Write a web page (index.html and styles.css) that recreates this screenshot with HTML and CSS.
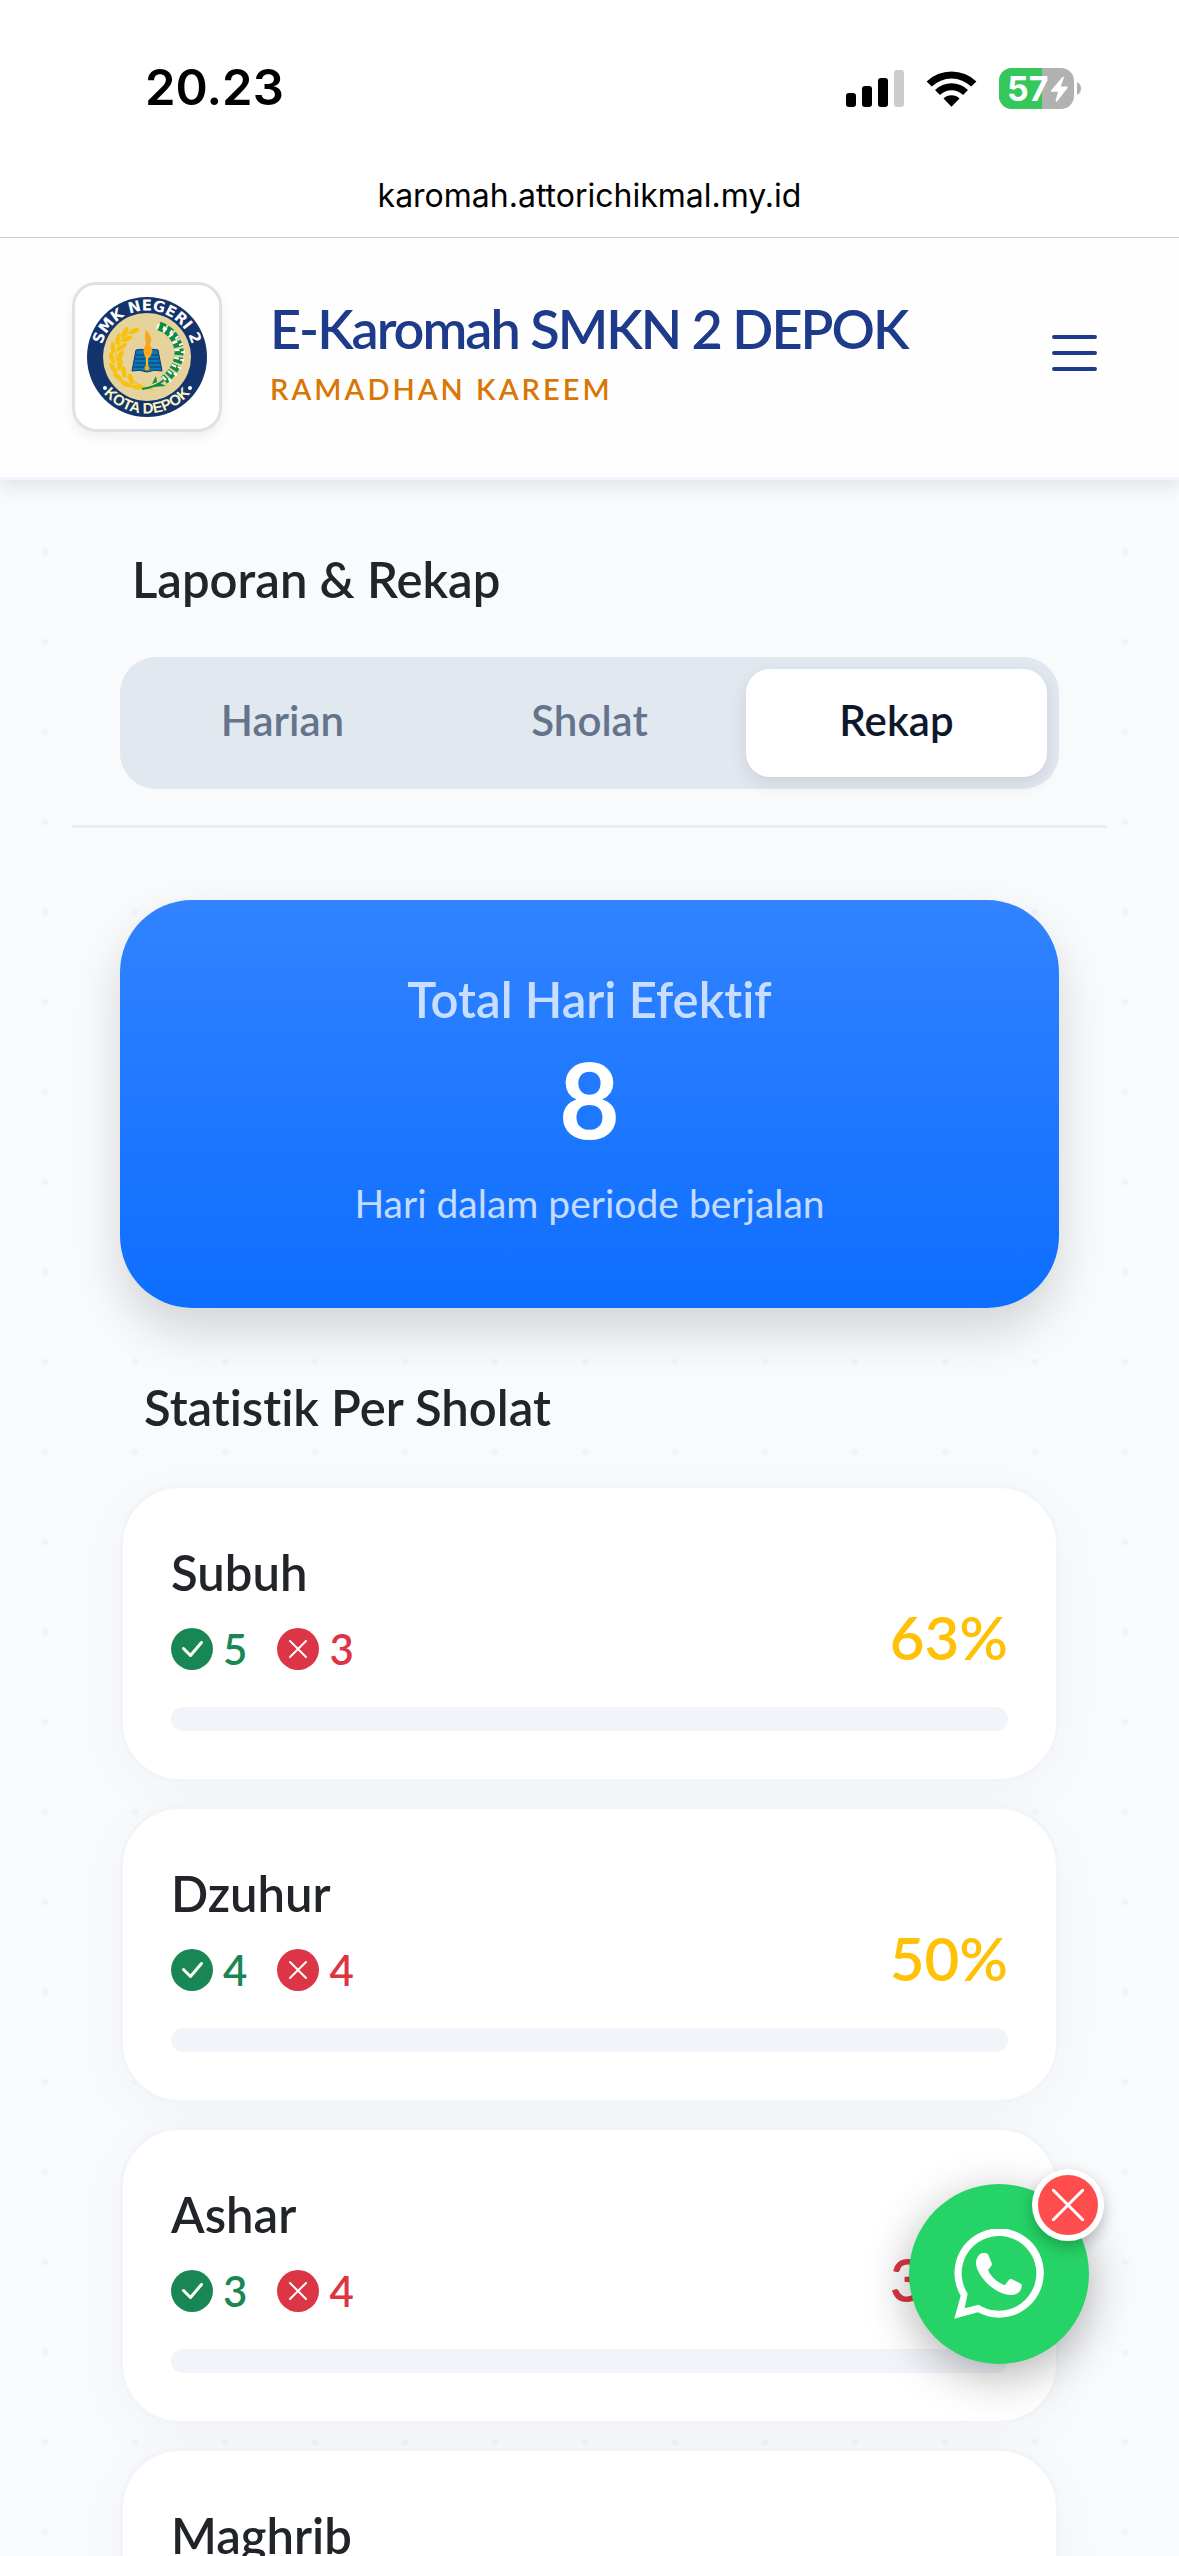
FILE: index.html
```html
<!DOCTYPE html>
<html lang="id">
<head>
    <meta charset="UTF-8">
    <meta name="viewport" content="width=device-width, initial-scale=1.0">
    <title>E-Karomah SMKN 2 DEPOK</title>
    <link rel="stylesheet" href="styles.css">
</head>
<body>
    <!-- Status bar -->
    <div class="browser-bar">
        <div class="status-bar">
            <span class="clock">20.23</span>
            <div class="status-icons">
                <svg class="signal" viewBox="0 0 58 37" aria-hidden="true">
                    <rect x="0" y="23" width="10" height="14" rx="3"/>
                    <rect x="16" y="16" width="10" height="21" rx="3"/>
                    <rect x="32" y="8" width="10" height="29" rx="3"/>
                    <rect x="48" y="0" width="10" height="37" rx="3" fill="#ccc"/>
                </svg>
                <svg class="wifi" viewBox="0 0 51 37" aria-hidden="true">
                    <path d="M0.6 11.4a36 36 0 0 1 49.8 0l-5.2 5.1a28.500 28.500 0 0 0-39.400 0z"/>
                    <path d="M9 20a23.500 23.500 0 0 1 33 0l-5 5a16.500 16.500 0 0 0-23 0z"/>
                    <path d="M17.500 28.500a11.500 11.500 0 0 1 16 0l-8 8.200z"/>
                </svg>
                <svg class="battery" viewBox="0 0 82 41" role="img" aria-label="57%">
                    <defs>
                        <clipPath id="batt"><rect width="75" height="41" rx="13"/></clipPath>
                    </defs>
                    <g clip-path="url(#batt)">
                        <rect width="75" height="41" fill="#b1b1b1"/>
                        <rect width="43" height="41" fill="#34c759"/>
                    </g>
                    <path d="M78 14q4 2 4 6.500t-4 6.500z" fill="#b1b1b1"/>
                    <text x="8" y="33" class="battery-text">57</text>
                    <path d="M63.500 9L52 22.500q-.6 1.300.8 1.300h6.200L56.500 33q.6 1.300 1.800.3L68.500 20q.6-1.400-.8-1.500h-5.900l3-8.700q-.2-1.500-1.300-.8z" fill="#fff"/>
                </svg>
            </div>
        </div>
        <div class="url">karomah.attorichikmal.my.id</div>
    </div>

    <div class="page">
        <header class="navbar">
            <div class="logo">
                <svg viewBox="0 0 120 120" role="img" aria-label="SMK Negeri 2 Kota Depok">
                    <defs>
                        <path id="arcTop" d="M13.500 60a46.500 46.500 0 0 1 93 0"/>
                        <path id="arcBottom" d="M3.500 60a56.500 56.500 0 0 0 113 0"/>
                        <ellipse id="leaf" rx="2.400" ry="6"/>
                    </defs>
                    <circle cx="60" cy="60" r="60" fill="#12336b"/>
                    <circle cx="60" cy="60" r="44" fill="#e5d39b"/>
                    <text class="seal-text"><textPath href="#arcTop" startOffset="50%" text-anchor="middle">SMK NEGERI 2</textPath></text>
                    <text class="seal-text seal-bottom"><textPath href="#arcBottom" startOffset="50%" text-anchor="middle">KOTA DEPOK</textPath></text>
                    <circle cx="18" cy="91" r="2" fill="#fff"/>
                    <circle cx="103" cy="91" r="2" fill="#fff"/>
                    <!-- wheat -->
                    <g fill="#f9c20a">
                        <path d="M50 32Q32 38 29 58q1 24 37 35" fill="none" stroke="#f9c20a" stroke-width="1.200"/>
                        <use href="#leaf" transform="translate(47 34) rotate(68)"/>
                        <use href="#leaf" transform="translate(38 35) rotate(30)"/>
                        <use href="#leaf" transform="translate(40 42) rotate(65)"/>
                        <use href="#leaf" transform="translate(31 42) rotate(15)"/>
                        <use href="#leaf" transform="translate(35 50) rotate(50)"/>
                        <use href="#leaf" transform="translate(26 51) rotate(-5)"/>
                        <use href="#leaf" transform="translate(33 59) rotate(30)"/>
                        <use href="#leaf" transform="translate(25 61) rotate(-20)"/>
                        <use href="#leaf" transform="translate(33 68) rotate(15)"/>
                        <use href="#leaf" transform="translate(26 71) rotate(-35)"/>
                        <use href="#leaf" transform="translate(37 75) rotate(-5)"/>
                        <use href="#leaf" transform="translate(31 80) rotate(-50)"/>
                        <use href="#leaf" transform="translate(44 82) rotate(-15)"/>
                        <use href="#leaf" transform="translate(39 87) rotate(-65)"/>
                        <use href="#leaf" transform="translate(50 90) rotate(-85)"/>
                    </g>
                    <!-- cotton -->
                    <path d="M55 92q14-2 22-9" fill="none" stroke="#0d8c46" stroke-width="2"/>
                    <path d="M72 29q17 6 20 24 1 17-15 30" fill="none" stroke="#0d8c46" stroke-width="9" stroke-dasharray="6 2"/>
                    <path d="M70 29q17 6 20 24 1 17-15 30" fill="none" stroke="#fff" stroke-width="5" stroke-dasharray="2 6"/>
                    <path d="M76 31q17 6 20 24 0 17-15 30" fill="none" stroke="#fff" stroke-width="4" stroke-dasharray="2 6"/>
                    <path d="M65 87l4-8 1 6zM66 90l13-1-6-3z" fill="#0d8c46"/>
                    <!-- book and torch -->
                    <path d="M49 53q6-2 11 1 6-3 11-1l4 21q-8-2-15 1-8-3-15-1z" fill="#0b78b8" stroke="#12336b"/>
                    <path d="M49 58h9M62 58h9M48 62h10M62 62h10M48 66h10M62 66h11M47 70h11M62 70h12" stroke="#12336b"/>
                    <path d="M59 33q8 8 4 15 5 6-1 13h-3q-5-7 0-14-2-8 0-14z" fill="#f5a81c"/>
                    <path d="M60 58v11" stroke="#f9c20a" stroke-width="2"/>
                    <circle cx="60" cy="71" r="2.500" fill="#f5a81c"/>
                </svg>
            </div>
            <div class="brand">
                <h1>E-Karomah SMKN 2 DEPOK</h1>
                <p>RAMADHAN KAREEM</p>
            </div>
            <button type="button" class="menu-btn" aria-label="Menu">
                <svg viewBox="0 0 45 40" aria-hidden="true">
                    <path d="M2 3h41M2 19h41M2 35h41"/>
                </svg>
            </button>
        </header>

        <main class="content">
            <section class="page-head">
                <h2 class="section-title">Laporan &amp; Rekap</h2>
                <nav class="tabs">
                    <button type="button">Harian</button>
                    <button type="button">Sholat</button>
                    <button type="button" class="active">Rekap</button>
                </nav>
            </section>

            <div class="recap">
                <section class="total-card">
                    <h3>Total Hari Efektif</h3>
                    <div class="total">8</div>
                    <p>Hari dalam periode berjalan</p>
                </section>

                <h2 class="section-title stat-title">Statistik Per Sholat</h2>

                <div class="stat-list">
                    <article class="stat-card">
                        <div class="stat-head">
                            <div>
                                <h3>Subuh</h3>
                                <div class="counts">
                                    <span class="count done"><svg viewBox="0 0 42 42" aria-hidden="true"><circle cx="21" cy="21" r="21"/><path d="M12.500 20.500l7 7L30.500 14.500"/></svg>5</span>
                                    <span class="count missed"><svg viewBox="0 0 42 42" aria-hidden="true"><circle cx="21" cy="21" r="21"/><path d="M13 13l16 16M29 13L13 29"/></svg>3</span>
                                </div>
                            </div>
                            <span class="percent warning">63%</span>
                        </div>
                        <div class="progress"></div>
                    </article>

                    <article class="stat-card">
                        <div class="stat-head">
                            <div>
                                <h3>Dzuhur</h3>
                                <div class="counts">
                                    <span class="count done"><svg viewBox="0 0 42 42" aria-hidden="true"><circle cx="21" cy="21" r="21"/><path d="M12.500 20.500l7 7L30.500 14.500"/></svg>4</span>
                                    <span class="count missed"><svg viewBox="0 0 42 42" aria-hidden="true"><circle cx="21" cy="21" r="21"/><path d="M13 13l16 16M29 13L13 29"/></svg>4</span>
                                </div>
                            </div>
                            <span class="percent warning">50%</span>
                        </div>
                        <div class="progress"></div>
                    </article>

                    <article class="stat-card">
                        <div class="stat-head">
                            <div>
                                <h3>Ashar</h3>
                                <div class="counts">
                                    <span class="count done"><svg viewBox="0 0 42 42" aria-hidden="true"><circle cx="21" cy="21" r="21"/><path d="M12.500 20.500l7 7L30.500 14.500"/></svg>3</span>
                                    <span class="count missed"><svg viewBox="0 0 42 42" aria-hidden="true"><circle cx="21" cy="21" r="21"/><path d="M13 13l16 16M29 13L13 29"/></svg>4</span>
                                </div>
                            </div>
                            <span class="percent danger">38%</span>
                        </div>
                        <div class="progress"></div>
                    </article>

                    <article class="stat-card">
                        <h3>Maghrib</h3>
                        <div class="progress"></div>
                    </article>
                </div>
            </div>
        </main>
    </div>

    <!-- Floating WhatsApp button -->
    <div class="wa-float">
        <a href="#" class="wa-btn" aria-label="WhatsApp">
            <svg viewBox="0 0 270 270" aria-hidden="true">
                <path fill-rule="evenodd" d="M1 269L20 200A134 134 0 1 1 72 250ZM41 194L32 238L74 227A112 112 0 1 0 41 194Z"/>
                <path d="M85 72h9c5 0 8 3 10 8l9 22c2 5 0 8-3 11l-8 10c8 20 28 37 50 46l12-15c3-4 6-5 10-3l24 12c5 2 6 5 5 10-2 17-18 25-32 25C120 198 66 136 66 102c0-14 8-26 19-30z"/>
            </svg>
        </a>
        <button type="button" class="wa-close" aria-label="Tutup">
            <svg viewBox="0 0 32 32" aria-hidden="true"><path d="M1 1l30 30M31 1L1 31"/></svg>
        </button>
    </div>
</body>
</html>
```
FILE: styles.css
```css
* { box-sizing: border-box; }
body {
    display: flex;
    flex-direction: column;
    height: 100vh;
    margin: 0;
    overflow: hidden;
    font-family: Lato, "Liberation Sans", sans-serif;
    font-variant-ligatures: none;
    color: #212529;
    background: #fff;
}
h1, h2, h3, p { margin: 0; }
button { font-family: inherit; border: none; padding: 0; cursor: pointer; }
svg { display: block; }

/* Status bar */
.browser-bar {
    flex: none;
    padding-top: 58px;
    font-family: Inter, "Liberation Sans", sans-serif;
    color: #000;
}
.status-bar {
    display: flex;
    justify-content: space-between;
    align-items: center;
    height: 60px;
    padding: 0 98px 0 145px;
}
.clock { font-size: 49px; font-weight: 600; line-height: 60px; }
.status-icons { display: flex; align-items: center; gap: 22px; }
.signal { width: 58px; height: 37px; }
.wifi { width: 51px; height: 37px; }
.battery { width: 82px; height: 41px; }
.battery-text { font-size: 34px; font-weight: 700; fill: #fff; }
.url {
    padding: 54px 0 17px;
    font-size: 32px;
    line-height: 48px;
    text-align: center;
}

/* Page */
.page {
    flex: 1;
    min-height: 0;
    overflow: hidden;
    background: radial-gradient(circle at center, #f1f5f9 3px, transparent 4px) 0 0 / 90px 90px #f9fafc;
}
.navbar {
    position: relative;
    display: flex;
    align-items: center;
    gap: 48px;
    padding: 44px 72px 45px;
    background: #fefefe;
    border-top: 1px solid #ccc;
    border-bottom: 3px solid #eff4fe;
    box-shadow: 0 6px 18px rgba(0,0,0,0.1);
}
.logo {
    width: 150px;
    height: 150px;
    padding: 12px;
    background: #fff;
    border: 3px solid #dee2e6;
    border-radius: 24px;
    box-shadow: 0 6px 12px rgba(0,0,0,0.06);
}
.seal-text {
    font-family: "DejaVu Sans", sans-serif;
    font-size: 15px;
    font-weight: 700;
    fill: #fff;
}
.seal-bottom {
    font-family: "Liberation Sans", sans-serif;
    fill: #fdf6c4;
}
.brand { flex: 1; padding-bottom: 12px; }
.brand h1 {
    font-size: 54px;
    font-weight: 600;
    line-height: 66px;
    letter-spacing: -2px;
    color: #1e3a8a;
}
.brand p {
    margin-top: 9px;
    font-size: 29px;
    font-weight: 600;
    line-height: 36px;
    letter-spacing: 3px;
    color: #d97706;
}
.menu-btn { padding: 0 10px 6px 0; background: none; }
.menu-btn svg {
    width: 45px;
    height: 40px;
    fill: none;
    stroke: #1e3a8a;
    stroke-width: 4;
    stroke-linecap: round;
}

.content { padding: 0 72px; }
.section-title { font-size: 49px; font-weight: 600; line-height: 60px; }
.page-head {
    padding: 69px 48px 36px;
    background: #f9fafc;
    border-bottom: 3px solid #ebedef;
}
.page-head .section-title { padding-left: 12px; }
.tabs {
    display: grid;
    grid-template-columns: repeat(3, 1fr);
    gap: 6px;
    margin-top: 48px;
    padding: 12px;
    background: #e2e8f0;
    border-radius: 36px;
}
.tabs button {
    height: 108px;
    padding-bottom: 6px;
    font-size: 42px;
    font-weight: 600;
    color: #64748b;
    background: none;
    border-radius: 24px;
}
.tabs .active {
    color: #0f172a;
    background: #fff;
    box-shadow: 0 6px 18px rgba(0,0,0,0.1);
}

/* Recap */
.recap { padding: 72px 48px 0; }
.total-card {
    padding: 69px 48px 75px;
    text-align: center;
    color: #fff;
    background: linear-gradient(180deg, #3183ff, #0d6eff);
    border-radius: 72px;
    box-shadow: 0 24px 48px rgba(0,0,0,0.15);
}
.total-card h3 {
    font-size: 49px;
    font-weight: 600;
    line-height: 60px;
    color: rgba(255,255,255,0.75);
}
.total {
    margin-top: 9px;
    font-size: 105px;
    font-weight: 700;
    line-height: 120px;
}
.total-card p {
    margin-top: 15px;
    font-size: 39px;
    line-height: 60px;
    color: rgba(255,255,255,0.75);
}
.stat-title { margin: 69px 0 48px; padding-left: 24px; }
.stat-list { display: grid; gap: 24px; }
.stat-card {
    padding: 48px;
    background: #fff;
    border: 3px solid #f1f5f9;
    border-radius: 60px;
    box-shadow: 0 12px 60px rgba(0,0,0,0.03);
}
.stat-card h3 { font-size: 49px; font-weight: 600; line-height: 72px; }
.stat-head { display: flex; justify-content: space-between; align-items: flex-end; }
.counts { display: flex; gap: 30px; margin-top: 11px; }
.count {
    display: flex;
    align-items: center;
    gap: 10px;
    font-size: 42px;
    font-weight: 600;
    line-height: 60px;
}
.count svg { width: 42px; height: 42px; }
.count circle { fill: currentColor; }
.count path {
    fill: none;
    stroke: #fff;
    stroke-width: 2;
    stroke-linecap: round;
    stroke-linejoin: round;
}
.done path { stroke-width: 3; }
.done { color: #198754; }
.missed { color: #dc3545; }
.percent { font-size: 60px; font-weight: 600; line-height: 84px; }
.warning { color: #ffc107; }
.danger { color: #dc3545; }
.progress {
    height: 24px;
    margin-top: 28px;
    background: #f1f5f9;
    border-radius: 12px;
}

/* WhatsApp */
.wa-float {
    position: fixed;
    right: 90px;
    bottom: 192px;
    width: 180px;
    height: 180px;
}
.wa-btn {
    display: flex;
    align-items: center;
    justify-content: center;
    height: 180px;
    background: #25d366;
    border-radius: 50%;
    box-shadow: 0 12px 45px rgba(0,0,0,0.3);
}
.wa-btn svg { width: 90px; height: 90px; fill: #fff; }
.wa-close {
    position: absolute;
    top: -15px;
    right: -15px;
    display: flex;
    align-items: center;
    justify-content: center;
    width: 72px;
    height: 72px;
    background: #ff4d4d;
    border: 6px solid #fff;
    border-radius: 50%;
    box-shadow: 0 6px 15px rgba(0,0,0,0.25);
}
.wa-close svg {
    width: 32px;
    height: 32px;
    stroke: #fff;
    stroke-width: 3;
    stroke-linecap: round;
}
```
